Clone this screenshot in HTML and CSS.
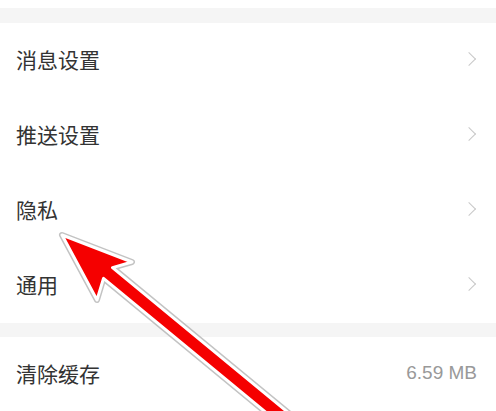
FILE: index.html
```html
<!DOCTYPE html>
<html lang="zh-CN">
<head>
    <meta charset="UTF-8" />
    <meta name="viewport" content="width=device-width, initial-scale=1.0" />
    <title>设置</title>
    <link rel="stylesheet" href="styles.css">
</head>
<body>
    <div class="topspace"></div>
    <div class="gap"></div>
    <div class="group">
        <div class="row"><span class="label">消息设置</span><span class="chevron"></span></div>
        <div class="row"><span class="label">推送设置</span><span class="chevron"></span></div>
        <div class="row"><span class="label">隐私</span><span class="chevron"></span></div>
        <div class="row"><span class="label">通用</span><span class="chevron"></span></div>
    </div>
    <div class="gap"></div>
    <div class="group">
        <div class="row"><span class="label">清除缓存</span><span class="value">6.59 MB</span></div>
    </div>

    <svg class="arrow" width="496" height="411" viewBox="0 0 496 411">
        <polygon class="arrow-shadow" points="62,235 132,262 112.5,267.6 312.5,432.6 303.5,443.4 103.5,278.4 97,300" />
        <polygon class="arrow-body" points="62,235 132,262 112.5,267.6 312.5,432.6 303.5,443.4 103.5,278.4 97,300" />
    </svg>
</body>
</html>
```

FILE: styles.css
```css
* {
    margin: 0;
    padding: 0;
    box-sizing: border-box;
}
body {
    font-family: "Liberation Sans", "Noto Sans CJK SC", sans-serif;
    background-color: white;
    width: 496px;
    height: 411px;
    overflow: hidden;
    position: relative;
}
.topspace {
    height: 8px;
    background-color: white;
}
.gap {
    height: 15px;
    background-color: rgb(245, 245, 245);
}
.group + .gap {
    height: 14px;
}
.row {
    height: 75px;
    padding: 0 19px 3px 16px;
    display: flex;
    align-items: center;
    justify-content: space-between;
}
.label {
    font-size: 21px;
    color: rgb(51, 51, 51);
}
.value {
    font-size: 19px;
    color: rgb(153, 153, 153);
}
.chevron {
    width: 10px;
    height: 10px;
    border-top: 1.5px solid rgb(200, 200, 200);
    border-right: 1.5px solid rgb(200, 200, 200);
    transform: rotate(45deg);
    margin-right: 3px;
}
.arrow {
    position: absolute;
    top: 0;
    left: 0;
}
.arrow-shadow {
    fill: none;
    stroke: rgb(170, 170, 170);
    stroke-width: 6;
    stroke-linejoin: round;
    opacity: 0.7;
}
.arrow-body {
    fill: rgb(245, 0, 0);
    stroke: white;
    stroke-width: 3;
    stroke-linejoin: round;
}
```
